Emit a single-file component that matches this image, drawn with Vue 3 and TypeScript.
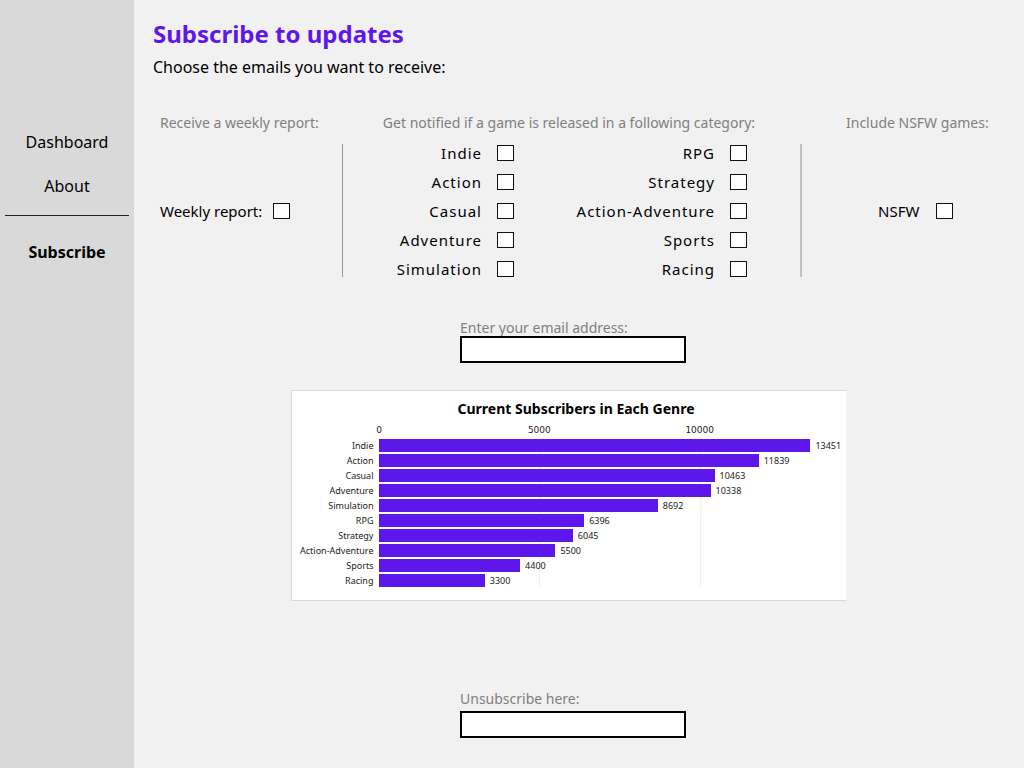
<script setup lang="ts">
import { ref } from 'vue'

interface Genre {
  name: string
  subscribers: number
}

const genres: Genre[] = [
  { name: 'Indie', subscribers: 13451 },
  { name: 'Action', subscribers: 11839 },
  { name: 'Casual', subscribers: 10463 },
  { name: 'Adventure', subscribers: 10338 },
  { name: 'Simulation', subscribers: 8692 },
  { name: 'RPG', subscribers: 6396 },
  { name: 'Strategy', subscribers: 6045 },
  { name: 'Action-Adventure', subscribers: 5500 },
  { name: 'Sports', subscribers: 4400 },
  { name: 'Racing', subscribers: 3300 },
]

const genreColumns: Genre[][] = [genres.slice(0, 5), genres.slice(5)]
const axisMax = 14000
const ticks: number[] = [0, 5000, 10000]

const selected = ref<string[]>([])
const weekly = ref(false)
const nsfw = ref(false)
const email = ref('')
const unsubscribeEmail = ref('')

const share = (value: number): string => `${(value / axisMax) * 100}%`
</script>

<template>
  <div class="page">
    <nav class="sidebar">
      <a href="#dashboard">Dashboard</a>
      <a href="#about">About</a>
      <hr />
      <a href="#subscribe" class="current" aria-current="page">Subscribe</a>
    </nav>

    <main class="content">
      <header class="intro">
        <h1>Subscribe to updates</h1>
        <p>Choose the emails you want to receive:</p>
      </header>

      <form class="options" @submit.prevent>
        <section class="option weekly">
          <h2>Receive a weekly report:</h2>
          <div class="option-body">
            <label class="choice">
              <span>Weekly report:</span>
              <input v-model="weekly" type="checkbox" />
            </label>
          </div>
        </section>

        <section class="option genres">
          <h2>Get notified if a game is released in a following category:</h2>
          <div class="option-body genre-columns">
            <div v-for="(column, i) in genreColumns" :key="i" class="genre-column">
              <label v-for="genre in column" :key="genre.name" class="choice spaced">
                <span>{{ genre.name }}</span>
                <input v-model="selected" type="checkbox" :value="genre.name" />
              </label>
            </div>
          </div>
        </section>

        <section class="option nsfw">
          <h2>Include NSFW games:</h2>
          <div class="option-body">
            <label class="choice">
              <span>NSFW</span>
              <input v-model="nsfw" type="checkbox" />
            </label>
          </div>
        </section>
      </form>

      <div class="field">
        <label for="email">Enter your email address:</label>
        <input id="email" v-model="email" type="email" />
      </div>

      <section class="chart">
        <h3>Current Subscribers in Each Genre</h3>
        <div class="axis">
          <span v-for="tick in ticks" :key="tick" class="tick" :style="{ left: share(tick) }">{{ tick }}</span>
        </div>
        <div class="plot">
          <div class="names">
            <span v-for="genre in genres" :key="genre.name">{{ genre.name }}</span>
          </div>
          <div class="bars">
            <i v-for="tick in ticks.slice(1)" :key="tick" class="gridline" :style="{ left: share(tick) }"></i>
            <div v-for="genre in genres" :key="genre.name" class="row">
              <div class="bar" :style="{ width: share(genre.subscribers) }"></div>
              <span>{{ genre.subscribers }}</span>
            </div>
          </div>
        </div>
      </section>

      <div class="field unsubscribe">
        <label for="unsubscribe">Unsubscribe here:</label>
        <input id="unsubscribe" v-model="unsubscribeEmail" type="email" />
      </div>
    </main>
  </div>
</template>

<style>
body {
  margin: 0;
  background: #f1f1f1;
}
</style>

<style scoped>
.page {
  display: grid;
  grid-template-columns: 134px minmax(0, 1fr);
  min-height: 100vh;
  box-sizing: border-box;
  background: #f1f1f1;
  color: #000;
  font-family: "Noto Sans", "Open Sans", sans-serif;
}

.sidebar {
  display: flex;
  flex-direction: column;
  align-items: center;
  gap: 20px;
  padding: 130px 5px 0;
  background: #d9d9d9;
  font-size: 16px;
  line-height: 24px;
}

.sidebar a {
  color: #000;
  text-decoration: none;
}

.sidebar hr {
  width: 100%;
  margin: -3px 0 4px;
  border: 0;
  border-top: 1px solid #222;
}

.sidebar .current {
  font-weight: 700;
}

.content {
  display: flex;
  flex-direction: column;
  padding-bottom: 30px;
}

.intro {
  padding: 16px 19px 0;
}

h1 {
  margin: 0;
  color: #5e17eb;
  font-size: 24px;
  line-height: 36px;
  font-weight: 700;
}

.intro p {
  margin: 3px 0 0;
  font-size: 16px;
  line-height: 24px;
}

.options {
  display: grid;
  grid-template-columns: 208px minmax(0, 1fr) 222px;
  margin-top: 34px;
}

h2 {
  margin: 0 0 11px;
  color: #808080;
  font-size: 14px;
  line-height: 20px;
  font-weight: 400;
  white-space: nowrap;
}

.weekly h2,
.weekly .option-body {
  padding-left: 26px;
}

.genres h2 {
  padding-right: 6px;
  text-align: center;
}

.nsfw h2 {
  padding-left: 44px;
}

.option-body {
  display: flex;
  align-items: center;
  height: 133px;
}

.genre-columns {
  display: grid;
  grid-template-columns: minmax(0, 1fr) 233px;
  align-content: center;
  box-sizing: border-box;
  padding-right: 53px;
  border-left: 1px solid #999;
  border-right: 2px solid #c0c0c0;
}

.nsfw .option-body {
  padding-left: 76px;
}

.nsfw .choice {
  gap: 17px;
}

.genre-column {
  display: grid;
  gap: 9px;
}

.choice {
  display: flex;
  align-items: center;
  justify-content: flex-end;
  gap: 11px;
  font-size: 15px;
  line-height: 20px;
}

.choice.spaced {
  gap: 15px;
  letter-spacing: 1px;
}

.choice input {
  appearance: none;
  box-sizing: border-box;
  width: 17px;
  height: 16px;
  margin: 0;
  border: 1px solid #111;
  border-radius: 0;
  background: #fff;
}

.choice input:checked {
  background: #5e17eb;
}

.field {
  display: flex;
  flex-direction: column;
  width: 226px;
  margin: 43px 0 0 326px;
}

.field label {
  color: #808080;
  font-size: 14px;
  line-height: 16px;
}

.field input {
  box-sizing: border-box;
  width: 100%;
  height: 27px;
  padding: 0 6px;
  border: 2px solid #000;
  border-radius: 0;
  background: #fff;
  font: inherit;
  font-size: 14px;
}

.chart {
  margin: 27px 177px 0 157px;
  padding: 8px 18px 13px 8px;
  border: 1px solid #d9d9d9;
  border-right-color: #f5f5f5;
  background: #fff;
}

.chart h3 {
  margin: 0;
  padding-left: 24px;
  font-size: 14px;
  line-height: 20px;
  font-weight: 700;
  text-align: center;
}

.axis {
  position: relative;
  height: 12px;
  margin: 5px 0 3px 79px;
}

.tick {
  position: absolute;
  transform: translateX(-50%);
  color: #222;
  font-family: "DejaVu Sans", sans-serif;
  font-size: 9px;
  line-height: 12px;
}

.plot {
  display: grid;
  grid-template-columns: 73px minmax(0, 1fr);
  gap: 6px;
  color: #222;
  font-size: 9px;
  line-height: 13px;
}

.names,
.bars {
  display: grid;
  grid-auto-rows: 13px;
  gap: 2px;
}

.names {
  text-align: right;
  white-space: nowrap;
  justify-items: end;
}

.bars {
  position: relative;
}

.gridline {
  position: absolute;
  top: 0;
  bottom: 0;
  width: 1px;
  background: #eee;
}

.row {
  position: relative;
  display: flex;
  gap: 5px;
}

.bar {
  flex: none;
  background: #5e17eb;
}

.unsubscribe {
  margin-top: 90px;
}

.unsubscribe input {
  margin-top: 4px;
}
</style>
